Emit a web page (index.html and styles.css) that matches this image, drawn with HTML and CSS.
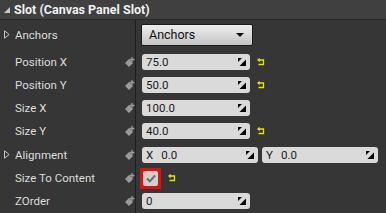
FILE: index.html
```html
<!DOCTYPE html>
<html>
<head>
<meta charset="utf-8">
<link rel="stylesheet" href="styles.css">
</head>
<body>
<div class="panel">
  <div class="header"><span class="tri-down"></span><span class="title">Slot (Canvas Panel Slot)</span></div>
  <div class="rows">
    <div class="row row-anchors">
      <div class="name"><svg class="tri-right" width="6" height="9" viewBox="0 0 6 9"><path d="M0.5 0.8L5.2 4.5L0.5 8.2Z" fill="none" stroke="#c4c4c4" stroke-width="1"/></svg>Anchors</div>
      <div class="value">
        <div class="combo"><span>Anchors</span><span class="caret"></span></div>
      </div>
    </div>
    <div class="row">
      <div class="name">Position X</div>
      <div class="kicon"><svg width="10" height="10" viewBox="0 0 10 10"><polygon points="0,6 4,2 8,6 4,10" fill="#9a9a9a"/><path d="M7 0v5M4.5 2.5h5" stroke="#9a9a9a" stroke-width="1.3"/></svg></div>
      <div class="value">
        <div class="num w108"><span>75.0</span><svg class="drag" width="8" height="8" viewBox="0 0 8 8"><polygon points="0,0 4,0 0,4" fill="#000"/><polygon points="8,1.5 8,8 1.5,8" fill="#000"/></svg></div>
        <svg class="reset" width="8" height="8" viewBox="0 0 8 8"><path d="M2 2H6.5V6.5H1.5" fill="none" stroke="#e6e600" stroke-width="1.3"/><polygon points="0,2 2.6,-0.3 2.6,4.3" fill="#e6e600"/></svg>
      </div>
    </div>
    <div class="row">
      <div class="name">Position Y</div>
      <div class="kicon"><svg width="10" height="10" viewBox="0 0 10 10"><polygon points="0,6 4,2 8,6 4,10" fill="#9a9a9a"/><path d="M7 0v5M4.5 2.5h5" stroke="#9a9a9a" stroke-width="1.3"/></svg></div>
      <div class="value">
        <div class="num w108"><span>50.0</span><svg class="drag" width="8" height="8" viewBox="0 0 8 8"><polygon points="0,0 4,0 0,4" fill="#000"/><polygon points="8,1.5 8,8 1.5,8" fill="#000"/></svg></div>
        <svg class="reset" width="8" height="8" viewBox="0 0 8 8"><path d="M2 2H6.5V6.5H1.5" fill="none" stroke="#e6e600" stroke-width="1.3"/><polygon points="0,2 2.6,-0.3 2.6,4.3" fill="#e6e600"/></svg>
      </div>
    </div>
    <div class="row">
      <div class="name">Size X</div>
      <div class="kicon"><svg width="10" height="10" viewBox="0 0 10 10"><polygon points="0,6 4,2 8,6 4,10" fill="#9a9a9a"/><path d="M7 0v5M4.5 2.5h5" stroke="#9a9a9a" stroke-width="1.3"/></svg></div>
      <div class="value">
        <div class="num w108"><span>100.0</span><svg class="drag" width="8" height="8" viewBox="0 0 8 8"><polygon points="0,0 4,0 0,4" fill="#000"/><polygon points="8,1.5 8,8 1.5,8" fill="#000"/></svg></div>
      </div>
    </div>
    <div class="row">
      <div class="name">Size Y</div>
      <div class="kicon"><svg width="10" height="10" viewBox="0 0 10 10"><polygon points="0,6 4,2 8,6 4,10" fill="#9a9a9a"/><path d="M7 0v5M4.5 2.5h5" stroke="#9a9a9a" stroke-width="1.3"/></svg></div>
      <div class="value">
        <div class="num w108"><span>40.0</span><svg class="drag" width="8" height="8" viewBox="0 0 8 8"><polygon points="0,0 4,0 0,4" fill="#000"/><polygon points="8,1.5 8,8 1.5,8" fill="#000"/></svg></div>
        <svg class="reset" width="8" height="8" viewBox="0 0 8 8"><path d="M2 2H6.5V6.5H1.5" fill="none" stroke="#e6e600" stroke-width="1.3"/><polygon points="0,2 2.6,-0.3 2.6,4.3" fill="#e6e600"/></svg>
      </div>
    </div>
    <div class="row">
      <div class="name"><svg class="tri-right" width="6" height="9" viewBox="0 0 6 9"><path d="M0.5 0.8L5.2 4.5L0.5 8.2Z" fill="none" stroke="#c4c4c4" stroke-width="1"/></svg>Alignment</div>
      <div class="kicon"><svg width="10" height="10" viewBox="0 0 10 10"><polygon points="0,6 4,2 8,6 4,10" fill="#9a9a9a"/><path d="M7 0v5M4.5 2.5h5" stroke="#9a9a9a" stroke-width="1.3"/></svg></div>
      <div class="value pair">
        <div class="num grow"><span class="axis">X</span><span>0.0</span><svg class="drag" width="8" height="8" viewBox="0 0 8 8"><polygon points="0,0 4,0 0,4" fill="#000"/><polygon points="8,1.5 8,8 1.5,8" fill="#000"/></svg></div>
        <div class="num grow"><span class="axis">Y</span><span>0.0</span><svg class="drag" width="8" height="8" viewBox="0 0 8 8"><polygon points="0,0 4,0 0,4" fill="#000"/><polygon points="8,1.5 8,8 1.5,8" fill="#000"/></svg></div>
      </div>
    </div>
    <div class="row">
      <div class="name">Size To Content</div>
      <div class="kicon"><svg width="10" height="10" viewBox="0 0 10 10"><polygon points="0,6 4,2 8,6 4,10" fill="#9a9a9a"/><path d="M7 0v5M4.5 2.5h5" stroke="#9a9a9a" stroke-width="1.3"/></svg></div>
      <div class="value">
        <div class="check"><div class="box"><svg width="10" height="9" viewBox="0 0 10 9"><path d="M1 4.5L3.8 7.3L9 1.5" fill="none" stroke="#6e6e6e" stroke-width="2"/></svg></div></div>
        <svg class="reset" width="8" height="8" viewBox="0 0 8 8"><path d="M2 2H6.5V6.5H1.5" fill="none" stroke="#e6e600" stroke-width="1.3"/><polygon points="0,2 2.6,-0.3 2.6,4.3" fill="#e6e600"/></svg>
      </div>
    </div>
    <div class="row">
      <div class="name">ZOrder</div>
      <div class="kicon"><svg width="10" height="10" viewBox="0 0 10 10"><polygon points="0,6 4,2 8,6 4,10" fill="#9a9a9a"/><path d="M7 0v5M4.5 2.5h5" stroke="#9a9a9a" stroke-width="1.3"/></svg></div>
      <div class="value">
        <div class="num w108"><span>0</span><svg class="drag" width="8" height="8" viewBox="0 0 8 8"><polygon points="0,0 4,0 0,4" fill="#000"/><polygon points="8,1.5 8,8 1.5,8" fill="#000"/></svg></div>
      </div>
    </div>
  </div>
</div>
</body>
</html>
```

FILE: styles.css
```css
* { box-sizing: border-box; }
html, body { margin: 0; padding: 0; }
body {
  width: 386px; height: 213px; overflow: hidden;
  background: #363636;
  font-family: Roboto, "Liberation Sans", sans-serif;
}
.panel { display: flex; flex-direction: column; height: 100%; }
.header {
  height: 21px; background: #404040;
  display: flex; align-items: center; padding-left: 4px;
  border-bottom: 1px solid #2a2a2a;
}
.tri-down {
  width: 0; height: 0;
  border-left: 6px solid transparent; border-bottom: 6px solid #c8c8c8;
  margin-right: 4px; margin-top: 1px;
}
.title { color: #f0f0f0; font-weight: bold; font-size: 12.5px; }
.rows { flex: 1; background: linear-gradient(to right, transparent 135px, #1e1e1e 135px, #1e1e1e 136px, transparent 136px); }
.row { display: grid; grid-template-columns: 125px 11px 1fr; align-items: center; height: 23.3px; }
.row-anchors { height: 30px; }
.name { color: #dcdcdc; font-size: 11.5px; padding-left: 15px; position: relative; white-space: nowrap; }
.tri-right { position: absolute; left: 4px; top: 50%; margin-top: -5px; }
.kicon { display: flex; align-items: center; }
.value { grid-column: 3; display: flex; align-items: center; padding-left: 6px; gap: 7px; }
.row-anchors .value { padding-left: 5px; }
.combo {
  width: 112px; height: 22px; border-radius: 2px;
  background: linear-gradient(#eeeeee, #c4c4c4);
  border: 1px solid #1a1a1a;
  display: flex; align-items: center; justify-content: space-between;
  padding: 0 8px 0 7px;
  font-size: 12.5px; color: #111;
}
.caret { width: 0; height: 0; border-left: 4px solid transparent; border-right: 4px solid transparent; border-top: 4px solid #111; }
.num {
  height: 16px; border-radius: 3px; background: #dadada;
  display: flex; align-items: center; padding: 0 4px;
  font-size: 11.5px; color: #1a1a1a;
}
.num .drag { margin-left: auto; }
.w108 { width: 108px; }
.pair { gap: 4px; padding-right: 8px; }
.grow { flex: 1; }
.axis { margin-right: 8px; }
.check {
  width: 21px; height: 21px; background: #e01010;
  display: flex; align-items: center; justify-content: center; margin-left: -2px;
}
.box { width: 15px; height: 15px; background: #d0d0d0; border-radius: 2px; display: flex; align-items: center; justify-content: center; }
.reset { flex: none; }
```
